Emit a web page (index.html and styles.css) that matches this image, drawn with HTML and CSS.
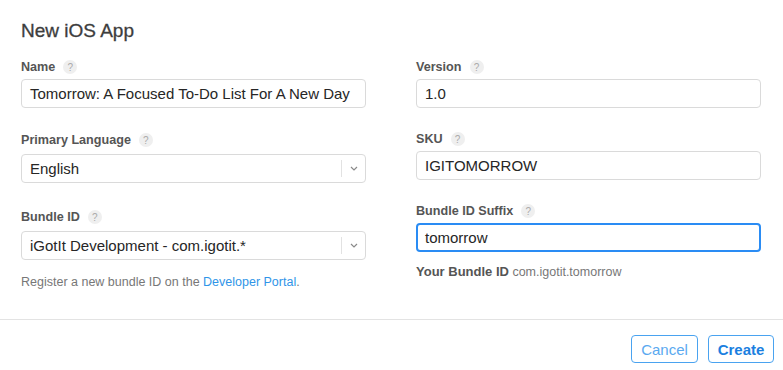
FILE: index.html
```html
<!DOCTYPE html>
<html>
<head>
<meta charset="utf-8">
<link rel="stylesheet" href="styles.css">
</head>
<body>
<div class="dialog">
  <div class="content">
    <h1 class="title">New iOS App</h1>
    <div class="columns">
      <div class="col col-left">
        <div class="field">
          <div class="label">Name <span class="help">?</span></div>
          <div class="input">Tomorrow: A Focused To-Do List For A New Day</div>
        </div>
        <div class="field">
          <div class="label label-select">Primary Language <span class="help">?</span></div>
          <div class="select">
            <span class="select-value">English</span>
            <span class="select-arrow"><svg width="8" height="5" viewBox="0 0 8 5"><path d="M1 1 L4 4 L7 1" fill="none" stroke="#8a8a8a" stroke-width="1.2"/></svg></span>
          </div>
        </div>
        <div class="field field-wide">
          <div class="label label-select">Bundle ID <span class="help">?</span></div>
          <div class="select">
            <span class="select-value">iGotIt Development - com.igotit.*</span>
            <span class="select-arrow"><svg width="8" height="5" viewBox="0 0 8 5"><path d="M1 1 L4 4 L7 1" fill="none" stroke="#8a8a8a" stroke-width="1.2"/></svg></span>
          </div>
          <p class="note note-left">Register a new bundle ID on the <a class="link" href="#">Developer Portal</a>.</p>
        </div>
      </div>
      <div class="col col-right">
        <div class="field">
          <div class="label">Version <span class="help">?</span></div>
          <div class="input">1.0</div>
        </div>
        <div class="field field-tight">
          <div class="label">SKU <span class="help">?</span></div>
          <div class="input">IGITOMORROW</div>
        </div>
        <div class="field field-tight">
          <div class="label">Bundle ID Suffix <span class="help">?</span></div>
          <div class="input input-focus">tomorrow</div>
          <p class="note note-right"><b class="note-strong">Your Bundle ID</b> com.igotit.tomorrow</p>
        </div>
      </div>
    </div>
  </div>
  <div class="footer">
    <button class="btn btn-cancel">Cancel</button>
    <button class="btn btn-create">Create</button>
  </div>
</div>
</body>
</html>
```
FILE: styles.css
```css
* { box-sizing: border-box; }
html, body { margin: 0; padding: 0; background: #fff; }
body {
  font-family: "Liberation Sans", Arial, sans-serif;
  color: #333;
  width: 783px;
  height: 370px;
  overflow: hidden;
}
.dialog { display: flex; flex-direction: column; height: 370px; }
.content { height: 319px; padding: 20px 22px 0 21px; }
.title {
  margin: 0;
  font-size: 19px;
  line-height: 22px;
  font-weight: normal;
  color: #3d3d3d;
  -webkit-text-stroke: 0.3px #3d3d3d;
}
.columns {
  display: grid;
  grid-template-columns: 345px 345px;
  column-gap: 50px;
  align-items: start;
  margin-top: 17px;
}
.field + .field { margin-top: 24px; }
.col-left .field-wide { margin-top: 26px; }
.col-right .field-tight { margin-top: 23px; }
.label {
  display: flex;
  align-items: center;
  height: 16px;
  font-size: 12.6px;
  font-weight: bold;
  color: #555;
  margin-bottom: 4px;
}
.label-select { margin-bottom: 6px; }
.help {
  display: inline-flex;
  align-items: center;
  justify-content: center;
  width: 14px;
  height: 14px;
  border-radius: 50%;
  background: #efefef;
  color: #aaa;
  font-size: 10px;
  font-weight: normal;
  margin-left: 8px;
}
.input, .select {
  height: 29px;
  border: 1px solid #dadada;
  border-radius: 4px;
  font-size: 15px;
  color: #262626;
  display: flex;
  align-items: center;
  padding-left: 8px;
}
.input-focus {
  border: 2px solid #2a8cf4;
  padding-left: 7px;
}
.select { padding-right: 0; }
.select-value { flex: 1; }
.select-arrow {
  width: 24px;
  height: 17px;
  border-left: 1px solid #e2e2e2;
  display: flex;
  align-items: center;
  justify-content: center;
}
.note {
  margin: 0;
  font-size: 12.5px;
  line-height: 16px;
  color: #777;
}
.note-left { margin-top: 14px; }
.note-right { margin-top: 12px; }
.note-strong { color: #555; font-size: 13px; }
.link { color: #2f95e8; text-decoration: none; }
.footer {
  border-top: 1px solid #e3e3e3;
  display: flex;
  justify-content: flex-end;
  gap: 10px;
  padding: 15px 9px 0 0;
}
.btn {
  height: 28px;
  border: 1px solid #4aa3f0;
  border-radius: 4px;
  background: #fff;
  font-family: "Liberation Sans", Arial, sans-serif;
  font-size: 15px;
  padding: 0;
}
.btn-cancel { width: 67px; color: #5aa9f0; }
.btn-create { width: 66px; color: #1b7fe0; font-weight: bold; }
```
